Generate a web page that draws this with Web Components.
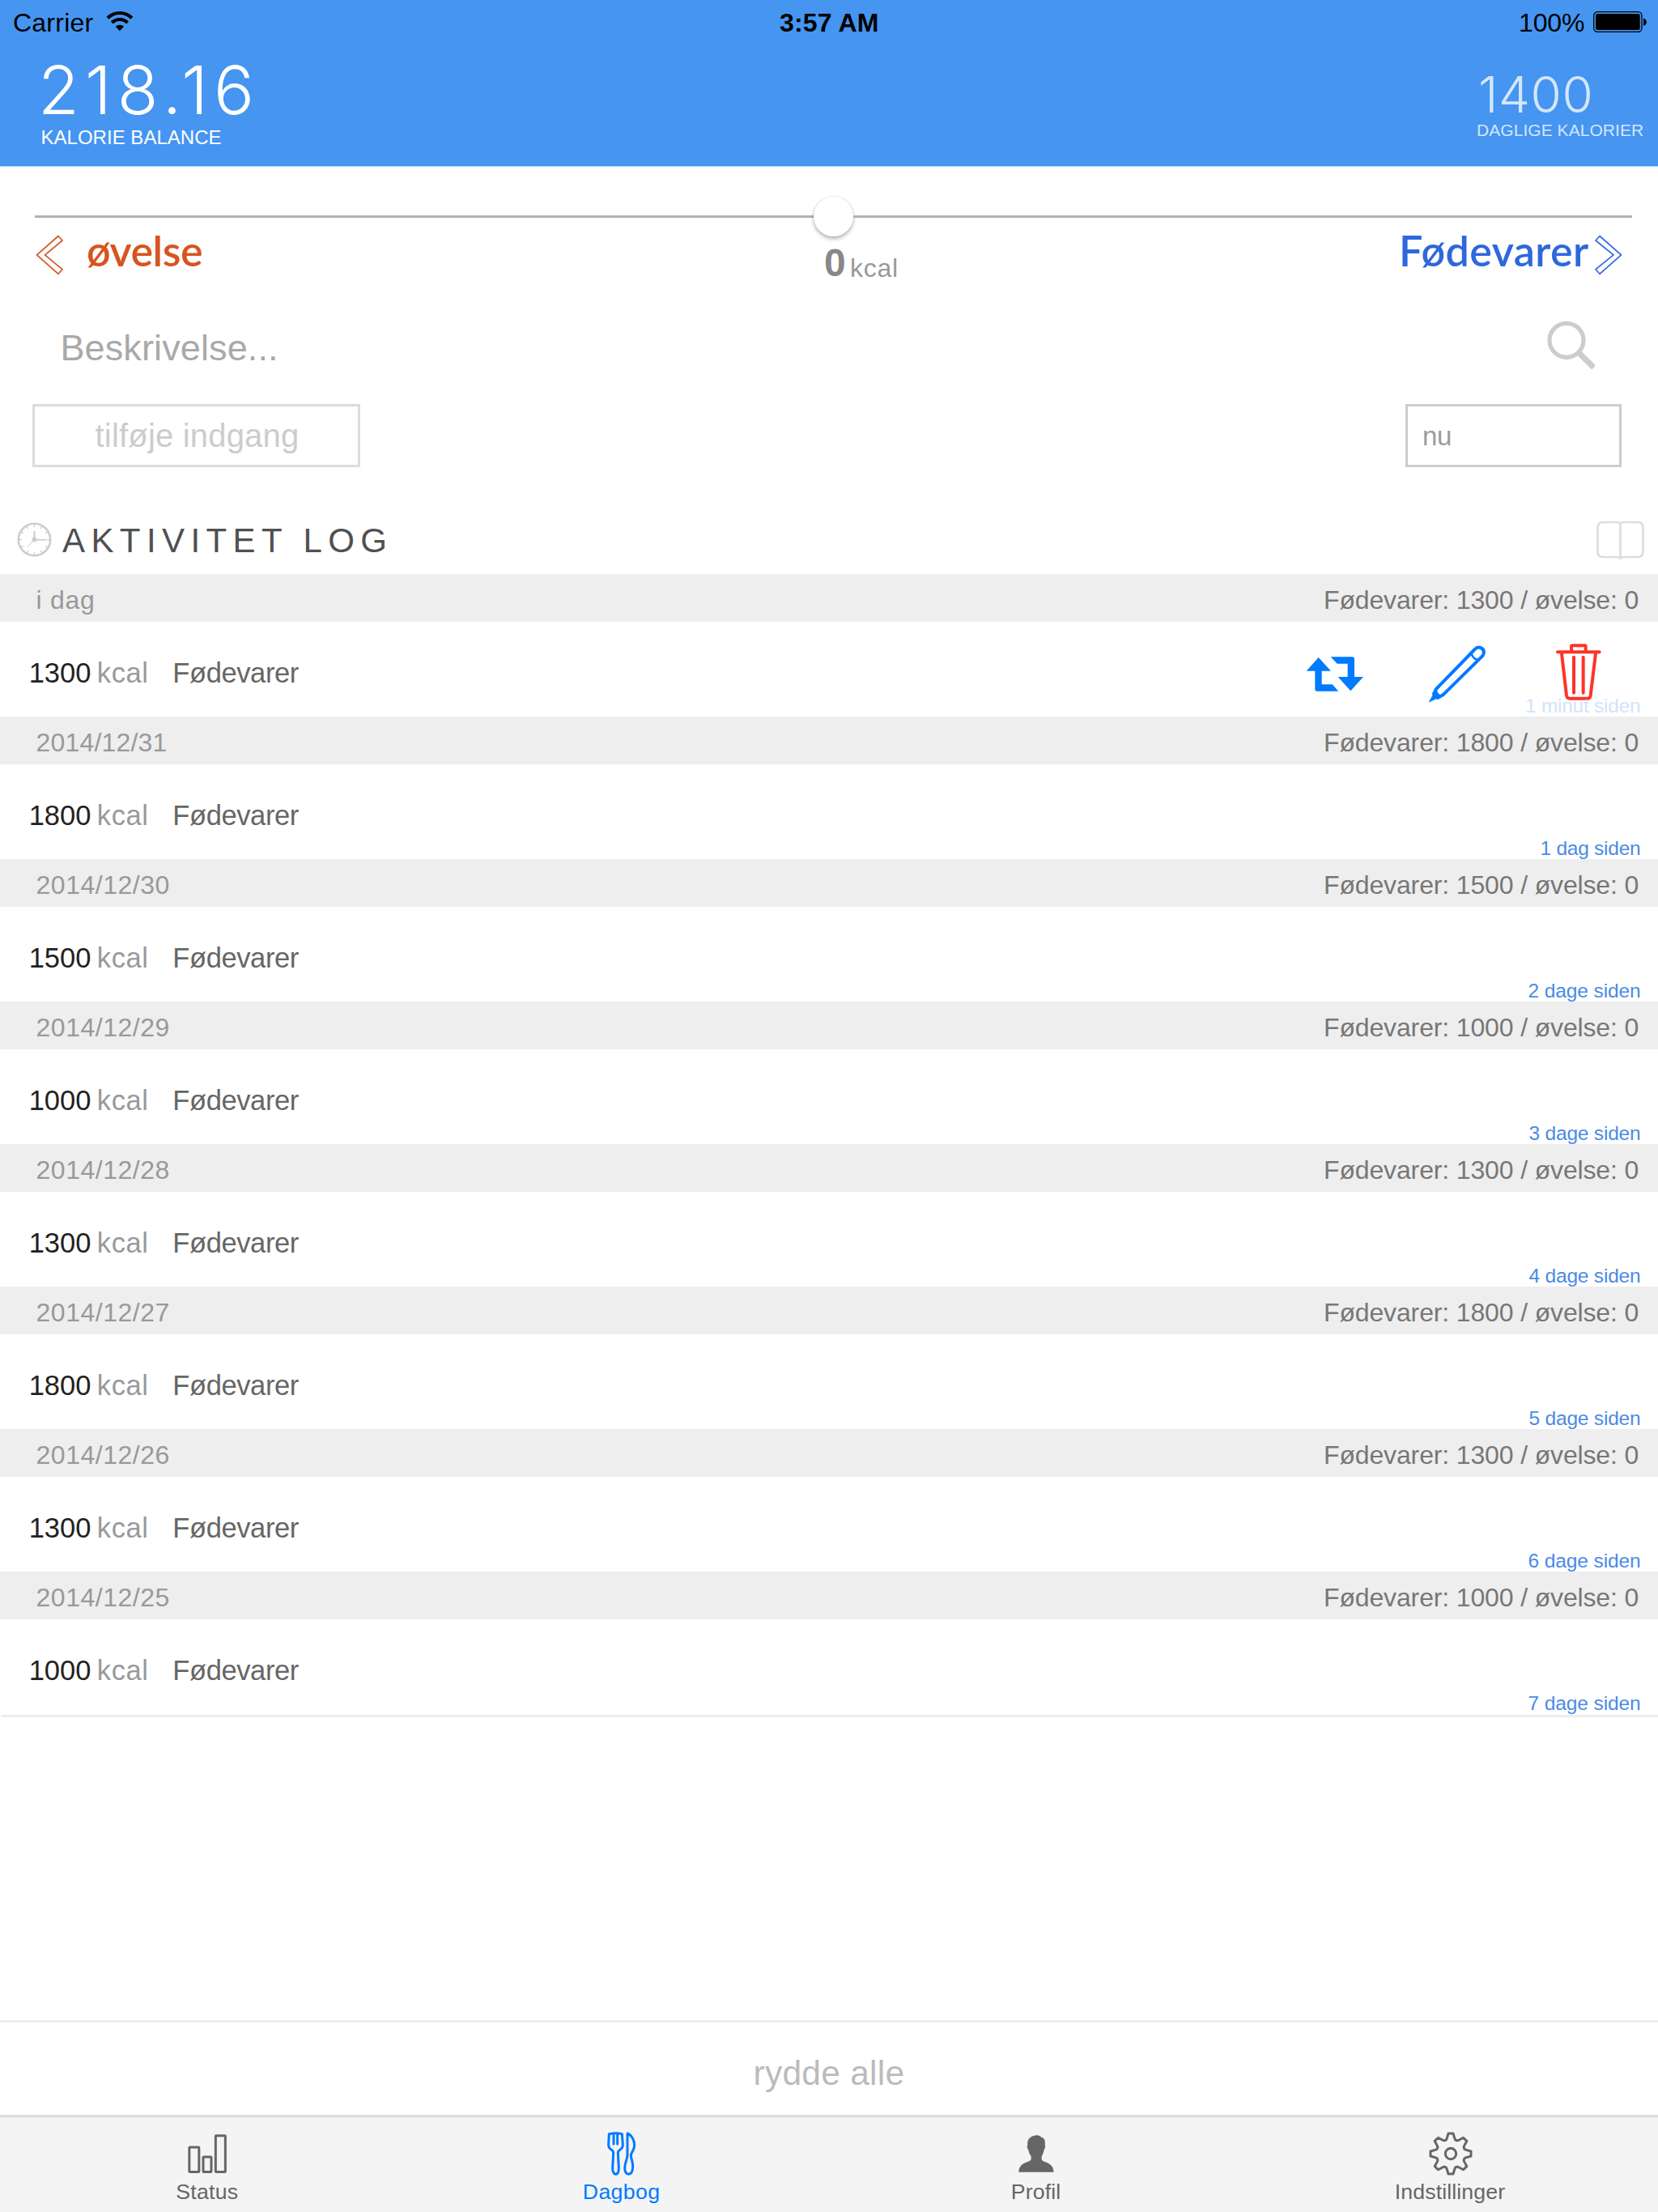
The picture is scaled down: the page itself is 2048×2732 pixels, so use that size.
<!DOCTYPE html>
<html lang="da">
<head>
<meta charset="utf-8">
<title>Dagbog</title>
<style>
body{margin:0;background:#fff;font-family:"Liberation Sans",Arial,sans-serif}
</style>
</head>
<body>
<diary-app></diary-app>
<script>
const define = (name, css, html, setup) => {
  const tpl = document.createElement('template');
  tpl.innerHTML = `<style>*{box-sizing:border-box}svg{display:block;flex:none}${css}</style>${html}`;
  customElements.define(name, class extends HTMLElement {
    constructor() {
      super();
      this.attachShadow({ mode: 'open' });
    }
    connectedCallback() {
      if (this.shadowRoot.childNodes.length) return;
      this.shadowRoot.append(tpl.content.cloneNode(true));
      if (setup) setup(this, this.shadowRoot);
    }
  });
};

/* One line of text: w = ink width, base = distance from the top of its box to the baseline. */
const ctx = document.createElement('canvas').getContext('2d');
define('ui-text', `
  :host{display:flow-root;flex:none;white-space:nowrap}
  span{display:block;line-height:1}
`, '<span><slot></slot></span>', (el, root) => {
  const size = +el.getAttribute('size');
  const weight = el.getAttribute('weight') || 400;
  const family = el.getAttribute('family') || 'Liberation Sans';
  const w = +el.getAttribute('w');
  const base = +el.getAttribute('base');
  const text = el.textContent;
  ctx.font = `${weight} ${size}px "${family}"`;
  const m = ctx.measureText(text);
  const ink = m.actualBoundingBoxLeft + m.actualBoundingBoxRight;
  const gap = text.length > 1 ? (w - ink) / (text.length - 1) : 0;
  const baseline = (size + m.fontBoundingBoxAscent - m.fontBoundingBoxDescent) / 2;
  el.style.width = w + 'px';
  el.style.height = base + 'px';
  const s = root.querySelector('span').style;
  s.font = `${weight} ${size}px/1 "${family}", sans-serif`;
  s.letterSpacing = gap + 'px';
  s.marginTop = base - baseline + 'px';
  s.marginLeft = m.actualBoundingBoxLeft + 'px';
});

define('status-bar', `
  :host{display:grid;grid-template-columns:1fr auto 1fr;height:53px;color:#000;align-items:start}
  .l{display:flex;gap:15px;padding-left:17px}
  .r{display:flex;gap:11px;justify-content:flex-end;padding-right:13px}
  .l svg,.r svg{margin-top:13px}
`, `
  <div class="l"><ui-text size="32" w="98.5" base="38.5">Carrier</ui-text>
    <svg width="34" height="26" viewBox="0 0 34 26" fill="none" stroke="#000" stroke-width="4.2">
      <path d="M2 9.2a21 21 0 0 1 29.800 0M7.300 15a13.500 13.500 0 0 1 19.200 0"/>
      <path d="M11.600 19.800a7.600 7.600 0 0 1 10.600 0L16.900 25.200z" fill="#000" stroke="none"/></svg></div>
  <ui-text size="32" weight="700" w="122" base="38.5">3:57 AM</ui-text>
  <div class="r"><ui-text size="32" w="79" base="38.5">100%</ui-text>
    <svg width="67" height="28" viewBox="0 0 67 28"><rect x=".7" y="1.700" width="59.300" height="24.600" rx="4.500" fill="none" stroke="#000" stroke-width="1.300"/><rect x="3" y="4" width="54.700" height="20" rx="2" fill="#000"/><path d="M62 9.500c5 1 5 8.500 0 9.500z"/></svg></div>
`);

define('summary-header', `
  :host{display:block;height:206px;background:#4595f1;border-bottom:1px solid #a6d3f9;color:#fff}
  .row{display:flex;justify-content:space-between;padding:0 18px 0 51.5px}
  .l,.r{display:flex;flex-direction:column}
  .r{color:#d3e6fc}
`, `
  <status-bar></status-bar>
  <div class="row">
    <div class="l"><ui-text style="margin-left:1.5px" family="Inter" weight="300" size="83" w="256" base="88.8">218.16</ui-text>
      <ui-text size="24" w="221" base="37.2">KALORIE BALANCE</ui-text></div>
    <div class="r"><ui-text style="margin-left:4px" family="Inter" weight="300" size="62" w="135.5" base="86.2">1400</ui-text>
      <ui-text size="21" w="205" base="28.8">DAGLIGE KALORIER</ui-text></div>
  </div>
`);

define('calorie-slider', `
  :host{display:block;height:164px}
  .track{margin:0 32px 0 42.5px;padding-top:36px;display:flex;align-items:center;height:86px}
  .line{height:3px;background:#b0b2b0;flex:1}
  .line:first-child{flex:0 0 962.500px}
  .thumb{width:49px;height:49px;border-radius:50%;background:#fff;box-shadow:0 3px 5px rgba(0,0,0,.28),0 0 3px rgba(0,0,0,.12)}
  .names{display:flex;justify-content:space-between;padding:0 44px 0 43.5px}
  .names>div{display:flex}
  .l{color:#d6551f;gap:30.500px;width:600px}.r{color:#2e68dc;gap:8px;width:600px;justify-content:flex-end}
  .m{gap:7px;color:#999;flex:1;padding-left:375.500px}
  .l svg,.r svg{margin-top:-3px}
`, `
  <div class="track"><div class="line"></div><div class="thumb"></div><div class="line"></div></div>
  <div class="names">
    <div class="l"><svg width="34" height="52" viewBox="0 0 34 52" fill="none" stroke="currentColor" stroke-width="1.700" stroke-linejoin="round"><path d="M28 2.500L1.500 25.800L28 49.300L33 43.700L11.500 25.800L33 8z"/></svg>
      <ui-text family="Lato" weight="600" size="52" w="141" base="36.5">øvelse</ui-text></div>
    <div class="m"><ui-text size="48" weight="700" w="26" base="49.5" style="color:#888">0</ui-text><ui-text size="32" w="55" base="49.5">kcal</ui-text></div>
    <div class="r"><ui-text family="Lato" weight="600" size="52" w="230" base="36.5">Fødevarer</ui-text>
      <svg width="34" height="52" viewBox="0 0 34 52" fill="none" stroke="currentColor" stroke-width="1.700" stroke-linejoin="round"><path d="M6 2.500L32.500 25.800L6 49.300L1 43.700L23 25.800L1 8z"/></svg></div>
  </div>
`);

define('entry-form', `
  :host{display:block;height:254.300px}
  .desc{display:flex;justify-content:space-between;height:128.500px;padding:0 78px 0 77.5px;color:#a9a9a9}
  .desc svg{margin-top:25px}
  .fields{display:flex;justify-content:space-between;padding:0 45px 0 40px}
  .box{height:78px;border:3px solid #dcdcdc}
  .add{width:405px;color:#ccc;padding-left:74.500px}
  .now{width:267px;border-color:#cdcdcd;color:#9c9c9c;padding-left:20px}
`, `
  <div class="desc"><ui-text size="45" w="262.5" base="75.2">Beskrivelse...</ui-text>
    <svg width="60" height="62" viewBox="0 0 60 62" fill="none" stroke="#ccc"><circle cx="25" cy="25.300" r="21" stroke-width="5.200"/><path d="M40 40.500L58.700 59" stroke-width="7"/></svg></div>
  <div class="fields">
    <div class="box add"><ui-text size="40" w="249.5" base="50.5">tilføje indgang</ui-text></div>
    <div class="box now"><ui-text size="33" w="33" base="48">nu</ui-text></div>
  </div>
`);

define('log-title', `
  :host{display:flex;height:85.200px;padding:0 17px 0 21px;justify-content:space-between}
  div{display:flex;gap:13px;color:#505050}
  div svg{margin-top:21px}
  :host>svg{margin-top:18.500px}
`, `
  <div><svg width="43" height="43" viewBox="0 0 43 43" fill="none" stroke="#ccc"><circle cx="21.500" cy="21.500" r="19.700" stroke-width="2.600"/><g id="ticks" stroke-width="1.300"></g><path d="M21.500 21.500V11" stroke-width="2.300"/><path d="M21.500 21.700H36" stroke-width="1.700"/><path d="M21.500 21.500L12.500 30.500" stroke-width="1"/><circle cx="21.500" cy="21.500" r="3" fill="#ccc" stroke="none"/></svg>
    <ui-text size="42" w="399" base="58.5">AKTIVITET LOG</ui-text></div>
  <svg width="59" height="48" viewBox="0 0 59 48" fill="none" stroke="#ddd" stroke-width="2.700"><path d="M29.500 3.300C28 2 27 2 25.500 2H8Q1.500 2 1.500 8.500V38.500Q1.500 45 8 45H25.500C27 45 28.500 45.500 29.500 47C30.500 45.500 32 45 33.500 45H51Q57.500 45 57.500 38.500V8.500Q57.500 2 51 2H33.500C32 2 31 2 29.500 3.300V47"/></svg>
`, (el, root) => {
  let d = '';
  for (let i = 0; i < 12; i++) d += `<path d="M21.500 2.500V6" transform="rotate(${i * 30} 21.500 21.500)"/>`;
  root.querySelector('#ticks').innerHTML = d;
});

define('day-header', `
  :host{display:flex;justify-content:space-between;height:58.667px;background:#eee;color:#999;padding:0 24.500px 0 45.500px}
  .r{color:#777}
`, '');

define('row-actions', `
  :host{display:flex}
  svg{margin-top:23.500px}
  .p{margin-left:76.700px}.t{margin-left:77.300px}
`, `
  <svg width="76" height="76" viewBox="155 305 228 228" fill="#007aff"><path d="M205 365L160 415H192V482Q192 490 200 490H279L256 465H217V415H251zM250 363H330Q338 363 338 371V437H371L324 489L277 437H313V388H274z"/></svg>
  <svg class="p" width="76" height="76" viewBox="613 305 228 228" fill="none" stroke="#007aff" stroke-width="12" stroke-linejoin="round"><path d="M643 482L786 335C800 319 825 332 818 353Q817 357 811 363L668 504L648 515L634 500z"/><path d="M774 352Q780 371 797 373" stroke-width="8"/><path d="M643 482L617 530L668 506Q648 507 644 482z" fill="#007aff" stroke-width="2"/></svg>
  <svg class="t" width="66" height="76" viewBox="1073 305 198 228" fill="none" stroke="#ff3328" stroke-width="12" stroke-linecap="round" stroke-linejoin="round"><path d="M1091 345H1246M1142 343V325Q1142 321 1146 321H1191Q1195 321 1195 325V343M1106 350L1124 506Q1126 517 1135 517H1203Q1211 517 1213 506L1232 350M1151 364V496M1186 364V496"/></svg>
`);

define('log-row', `
  :host{display:flex;height:117.333px;padding:0 22px 0 37.700px;color:#999;background:#fff}
  .spacer{flex:1}
  .amount{color:#222}.kcal{margin-left:10.600px}.kind{color:#666;margin-left:34px}
  .ago{color:#4a8be6}
  :host([active]) .ago{color:#d3e3f9;margin-left:-184px}
  row-actions{margin-right:85.300px}
`, '');

define('day-log', ':host{display:block}', '', (el, root) => {
  const { date, dw, food, ago, aw } = el.dataset;
  const head = document.createElement('day-header');
  const row = document.createElement('log-row');
  const active = el.hasAttribute('active');
  if (active) row.setAttribute('active', '');
  root.append(head, row);
  const inset = date === 'i dag' ? ' style="margin-left:1px"' : '';
  head.shadowRoot.innerHTML += `<ui-text size="32" w="${dw}" base="42.700"${inset}>${date}</ui-text><ui-text class="r" size="32" w="386.5" base="42.700">Fødevarer: ${food} / øvelse: 0</ui-text>`;
  row.shadowRoot.innerHTML += `
    <ui-text class="amount" size="34.500" w="73.500" base="75">${food}</ui-text>
    <ui-text class="kcal" size="34.500" w="59.500" base="75">kcal</ui-text>
    <ui-text class="kind" size="34.500" w="153.500" base="75">Fødevarer</ui-text>
    <div class="spacer"></div>${active ? '<row-actions></row-actions>' : ''}
    <ui-text class="ago" size="24.500" w="${aw}" base="112.800">${ago}</ui-text>`;
});

define('log-list', `
  :host{display:block;height:1785.100px}
  .end{height:3px;margin:.5px 0 0 2px;background:#ededed}
`, '<div id="days"></div><div class="end"></div>', (el, root) => {
  const foods = [1300, 1800, 1500, 1000, 1300, 1800, 1300, 1000];
  root.querySelector('#days').innerHTML = foods.map((food, i) => {
    const date = i ? `2014/12/${32 - i}` : 'i dag';
    const ago = i === 0 ? '1 minut siden' : i === 1 ? '1 dag siden' : `${i} dage siden`;
    const dw = i === 0 ? 68.5 : i === 1 ? 160 : 163;
    const aw = i === 0 ? 141 : i === 1 ? 122.5 : 137.5;
    return `<day-log ${i ? '' : 'active'} data-date="${date}" data-dw="${dw}" data-food="${food}" data-ago="${ago}" data-aw="${aw}"></day-log>`;
  }).join('');
});

define('clear-button', `
  :host{display:flex;justify-content:center;height:117.400px;border-top:3px solid #ededed;color:#bbb}
`, '<ui-text size="42.500" w="183" base="78.300">rydde alle</ui-text>');

const gear = (() => {
  const p = [];
  for (let k = 0; k < 8; k++) {
    const a = k * Math.PI / 4, c = Math.cos(a), s = Math.sin(a);
    for (const [x, y] of [[-17, -51], [-14, -58], [-9, -75], [9, -75], [14, -58], [17, -51]])
      p.push(`${(x * c - y * s + 90).toFixed(1)} ${(x * s + y * c + 120).toFixed(1)}`);
  }
  return `<path d="M${p.join('L')}z"/><circle cx="90" cy="120" r="20"/>`;
})();
const tabIcons = {
  status: '<g stroke-width="9"><rect x="23.500" y="96" width="36" height="91.500" rx="2"/><rect x="75" y="132" width="30" height="55.500" rx="2"/><rect x="121" y="53" width="36" height="134.500" rx="2"/></g>',
  diary: '<g stroke-width="9"><path d="M43 47Q67 41 91 47L94 88Q94 99 84 105Q76 109 76 118L79 172Q79 196 68 196Q56 196 56 172L59 118Q59 109 51 105Q41 99 41 88zM60 46V84M74 46V84"/><path d="M111 45C128 52 137 72 137 88C137 108 125 114 124 126C124 137 131 149 131 166Q131 196 115 196Q101 194 101 172C102 154 110 140 111 126z"/></g>',
  profile: '<path fill="currentColor" stroke="none" d="M90 52C99 51 106 54 109 59C121 61 124 72 122 89C125 92 122 101 119 106C117 119 113 124 110 130V141C114 154 153 149 155 188H25C27 149 66 154 71 141V130C67 124 63 119 61 106C57 101 54 92 58 89C55 70 65 55 90 52z"/>',
  settings: `<g stroke-width="9">${gear}</g>`
};
define('tab-item', `
  :host{display:flex;flex-direction:column;align-items:center;flex:1;padding-top:5px;color:#666}
  :host([active]){color:#007aff}
`, '<svg width="60" height="72" viewBox="0 0 180 216" fill="none" stroke="currentColor" stroke-linejoin="round" stroke-linecap="round"></svg>', (el, root) => {
  root.querySelector('svg').innerHTML = tabIcons[el.dataset.icon];
  root.innerHTML += `<ui-text size="26.700" w="${el.dataset.w}" base="24">${el.dataset.label}</ui-text>`;
});

define('tab-bar', `
  :host{display:flex;height:120px;background:#f4f4f4;border-top:3px solid #dcdcdc}
`, `
  <tab-item data-icon="status" data-label="Status" data-w="75.500"></tab-item>
  <tab-item active data-icon="diary" data-label="Dagbog" data-w="92.500"></tab-item>
  <tab-item data-icon="profile" data-label="Profil" data-w="58.500"></tab-item>
  <tab-item data-icon="settings" data-label="Indstillinger" data-w="134.500"></tab-item>
`);

define('diary-app', `
  :host{display:flex;flex-direction:column;width:2048px;height:2732px;background:#fff;overflow:hidden}
  :host>*{flex:none}
`, `
  <summary-header></summary-header>
  <calorie-slider></calorie-slider>
  <entry-form></entry-form>
  <log-title></log-title>
  <log-list></log-list>
  <clear-button></clear-button>
  <tab-bar></tab-bar>
`);
</script>
</body>
</html>
